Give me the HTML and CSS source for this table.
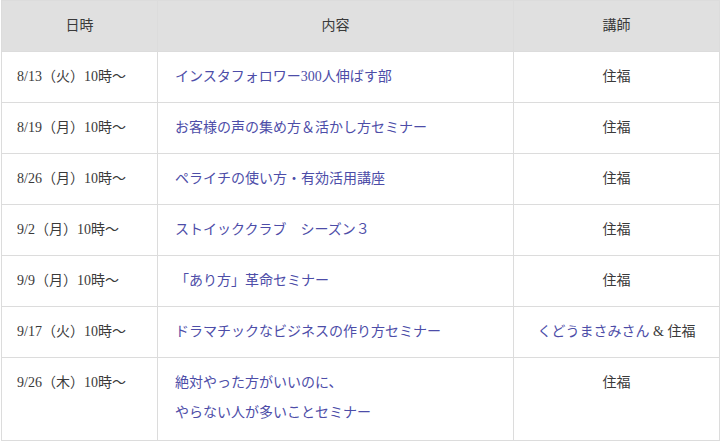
FILE: index.html
```html
<!DOCTYPE html>
<html lang="ja">
<head>
<meta charset="utf-8">
<link rel="stylesheet" href="styles.css">
</head>
<body>
<div class="wrap">
<table class="schedule">
  <colgroup>
    <col class="c-date">
    <col class="c-title">
    <col class="c-teacher">
  </colgroup>
  <thead>
    <tr><th>日時</th><th>内容</th><th>講師</th></tr>
  </thead>
  <tbody>
    <tr><td class="date">8/13（火）10時〜</td><td class="title">インスタフォロワー300人伸ばす部</td><td class="teacher">住福</td></tr>
    <tr><td class="date">8/19（月）10時〜</td><td class="title">お客様の声の集め方＆活かし方セミナー</td><td class="teacher">住福</td></tr>
    <tr><td class="date">8/26（月）10時〜</td><td class="title">ペライチの使い方・有効活用講座</td><td class="teacher">住福</td></tr>
    <tr><td class="date">9/2（月）10時〜</td><td class="title">ストイッククラブ　シーズン３</td><td class="teacher">住福</td></tr>
    <tr><td class="date">9/9（月）10時〜</td><td class="title">「あり方」革命セミナー</td><td class="teacher">住福</td></tr>
    <tr><td class="date">9/17（火）10時〜</td><td class="title">ドラマチックなビジネスの作り方セミナー</td><td class="teacher"><span class="link">くどうまさみさん</span> &amp; 住福</td></tr>
    <tr class="top"><td class="date">9/26（木）10時〜</td><td class="title">絶対やった方がいいのに、<br>やらない人が多いことセミナー</td><td class="teacher">住福</td></tr>
  </tbody>
</table>
</div>
</body>
</html>
```

FILE: styles.css
```css
html, body {
  margin: 0;
  padding: 0;
  background: #fff;
}
.wrap {
  padding: 0 0 0 1px;
}
.schedule {
  border-collapse: collapse;
  table-layout: fixed;
  width: 719px;
  font-family: "Liberation Serif", "Noto Sans CJK JP", serif;
  font-size: 14px;
  color: #3a3a3a;
}
.c-date { width: 156px; }
.c-title { width: 356px; }
.c-teacher { width: 206px; }
.schedule th,
.schedule td {
  border: 1px solid #dcdcdc;
  padding: 10px 15px;
  line-height: 30px;
  vertical-align: middle;
}
.schedule th {
  background: #e0e0e0;
  font-weight: normal;
  text-align: center;
  padding-top: 10px;
  padding-bottom: 10px;
}
.schedule td.title {
  color: #4d4da8;
  padding-left: 17px;
}
.schedule td.teacher {
  text-align: center;
}
.link {
  color: #4d4da8;
}
.schedule tr.top td {
  vertical-align: top;
  padding-bottom: 12px;
}
```
